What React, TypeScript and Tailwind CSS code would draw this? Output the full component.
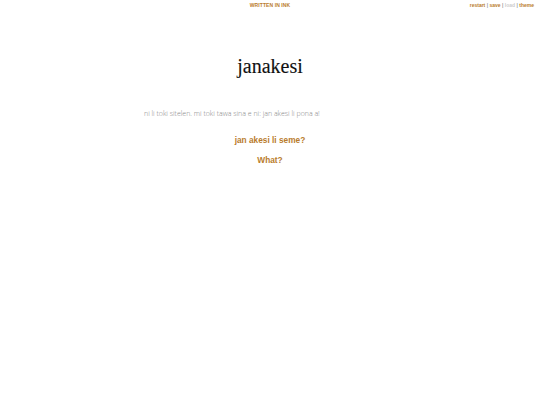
export default function App() {
  return (
    <div className="w-[540px] h-[405px] bg-white relative overflow-hidden">
      <div className="flex justify-center pt-[3px]">
        <span className="text-[5px] font-bold text-[#b97c2c] leading-none tracking-[0.02em]" style={{ fontFamily: '"Liberation Sans", Arial, sans-serif' }}>
          WRITTEN IN INK
        </span>
      </div>
      <div className="absolute top-[3px] right-[6px] text-[5px] font-bold leading-none text-[#b97c2c]" style={{ fontFamily: '"Liberation Sans", Arial, sans-serif' }}>
        <span>restart</span>
        <span className="text-[#999]"> | </span>
        <span>save</span>
        <span className="text-[#999]"> | </span>
        <span className="text-[#ccc]">load</span>
        <span className="text-[#999]"> | </span>
        <span>theme</span>
      </div>
      <div className="flex flex-col items-center">
        <h1 className="mt-[48px] text-[20px] leading-none text-[#111]" style={{ fontFamily: '"Liberation Serif", serif', WebkitTextStroke: '0.12px #111' }}>
          janakesi
        </h1>
        <div className="w-[252px] mt-[34px]">
          <p className="text-[7px] font-light text-[#888] leading-none" style={{ fontFamily: '"Open Sans", sans-serif' }}>
            ni li toki sitelen. mi toki tawa sina e ni: jan akesi li pona a!
          </p>
        </div>
        <div className="mt-[19px] flex flex-col items-center gap-[12px] text-[8.3px] font-bold text-[#b97c2c] leading-none" style={{ fontFamily: '"Liberation Sans", Arial, sans-serif' }}>
          <span>jan akesi li seme?</span>
          <span>What?</span>
        </div>
      </div>
    </div>
  );
}
